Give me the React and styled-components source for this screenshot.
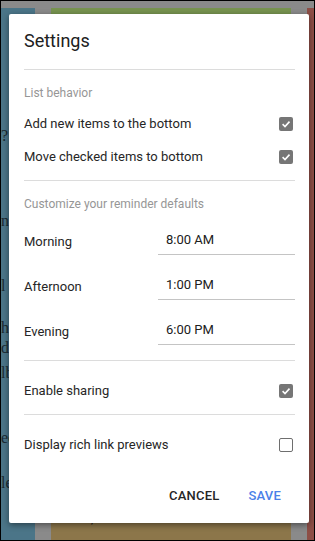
import styled, { createGlobalStyle } from "styled-components";

const GlobalStyle = createGlobalStyle`
  html, body {
    margin: 0;
    padding: 0;
    background: #ffffff;
  }
  * {
    box-sizing: border-box;
  }
`;

const Frame = styled.div`
  position: relative;
  width: 315px;
  height: 541px;
  border: 1px solid #000000;
  background: #8a8a8a;
  overflow: hidden;
  font-family: Roboto, "Liberation Sans", sans-serif;
`;

const Board = styled.div`
  display: flex;
  gap: 16px;
  height: 100%;
  padding-top: 7px;
`;

const Column = styled.div`
  display: flex;
  flex-direction: column;
  gap: 16px;
  width: ${(p) => p.width};
  flex: ${(p) => (p.width ? "none" : "1")};
`;

const Note = styled.div`
  background: ${(p) => p.color};
  height: ${(p) => p.height || "auto"};
  flex: ${(p) => (p.height ? "none" : "1")};
  display: flex;
  flex-direction: column;
`;

const Fragment = styled.span`
  display: block;
  margin-top: ${(p) => p.top}px;
  font-family: "Liberation Serif", serif;
  font-size: 16px;
  line-height: 16px;
  color: #1c2a31;
`;

const NoteTitle = styled.div`
  font-family: "Liberation Sans", sans-serif;
  font-weight: 700;
  font-size: 15px;
  line-height: 14px;
  color: #2a2416;
  padding-left: 14px;
  margin-top: -5px;
`;

const Dialog = styled.div`
  position: absolute;
  left: 8px;
  top: 13px;
  width: 300px;
  height: 509px;
  background: #ffffff;
  border-radius: 2px;
  box-shadow: 0 2px 6px rgba(0, 0, 0, 0.45);
  padding: 0 14px 0 15px;
  display: flex;
  flex-direction: column;
  color: #212121;
`;

const Title = styled.h2`
  margin: 0;
  padding: 17px 0 18px;
  font-size: 18px;
  line-height: 20px;
  font-weight: 400;
  color: #202020;
`;

const Divider = styled.div`
  height: 1px;
  background: #dcdcdc;
  flex: none;
`;

const Section = styled.div`
  display: flex;
  flex-direction: column;
  padding: ${(p) => p.pad};
`;

const SectionLabel = styled.div`
  font-size: 12px;
  line-height: 16px;
  color: #969696;
  margin-bottom: 6px;
`;

const Row = styled.label`
  display: flex;
  align-items: center;
  justify-content: space-between;
  height: 33px;
  font-size: 13px;
  color: #262626;
`;

const Box = styled.span`
  width: 14px;
  height: 14px;
  border-radius: 2px;
  margin-right: 2px;
  display: flex;
  align-items: center;
  justify-content: center;
  background: ${(p) => (p.checked ? "#767676" : "#ffffff")};
  border: ${(p) => (p.checked ? "none" : "1.5px solid #6e6e6e")};
`;

const ReminderList = styled.div`
  display: flex;
  flex-direction: column;
  gap: 13px;
  margin-top: 5px;
`;

const ReminderRow = styled.div`
  display: grid;
  grid-template-columns: 134px 1fr;
  align-items: center;
  height: 32px;
  font-size: 13px;
  color: #262626;
`;

const TimeField = styled.div`
  height: 32px;
  display: flex;
  align-items: center;
  padding: 2px 0 0 8px;
  border-bottom: 1px solid #c4c4c4;
  color: #202020;
`;

const ReminderName = styled.span`
  padding-top: 4px;
`;

const Actions = styled.div`
  margin-top: auto;
  display: flex;
  justify-content: flex-end;
  gap: 5px;
  padding: 0 2px 10px 0;
`;

const Button = styled.button`
  height: 36px;
  padding: 0 12px;
  border: none;
  background: none;
  font-family: Roboto, "Liberation Sans", sans-serif;
  font-size: 13px;
  font-weight: 500;
  letter-spacing: 0.2px;
  color: ${(p) => (p.primary ? "#4a80e8" : "#262626")};
`;

function Check({ checked }) {
  return (
    <Box checked={checked}>
      {checked && (
        <svg width="10" height="10" viewBox="0 0 10 10">
          <path
            d="M1.6 5.2 L4 7.5 L8.5 2.6"
            fill="none"
            stroke="#ffffff"
            strokeWidth="1.6"
          />
        </svg>
      )}
    </Box>
  );
}

const fragments = [
  { t: "?", top: 120 },
  { t: "n", top: 69 },
  { t: "l", top: 49 },
  { t: "h", top: 26 },
  { t: "d", top: 4 },
  { t: "lb", top: 9 },
  { t: "ec", top: 49 },
  { t: "le", top: 29 },
];

const reminders = [
  ["Morning", "8:00 AM"],
  ["Afternoon", "1:00 PM"],
  ["Evening", "6:00 PM"],
];

export default function App() {
  return (
    <>
      <GlobalStyle />
      <Frame>
        <Board>
          <Column width="34px">
            <Note color="#4b7588">
              {fragments.map((f, i) => (
                <Fragment key={i} top={f.top}>
                  {f.t}
                </Fragment>
              ))}
            </Note>
          </Column>
          <Column width="240px">
            <Note color="#77934f" height="491px" />
            <Note color="#8c764a">
              <NoteTitle>Tea, Oil and Air Filters</NoteTitle>
            </Note>
          </Column>
          <Column>
            <Note color="#8d4e46" />
          </Column>
        </Board>

        <Dialog>
          <Title>Settings</Title>
          <Divider />
          <Section pad="15px 0 7px">
            <SectionLabel>List behavior</SectionLabel>
            <Row>
              Add new items to the bottom
              <Check checked />
            </Row>
            <Row>
              Move checked items to bottom
              <Check checked />
            </Row>
          </Section>
          <Divider />
          <Section pad="15px 0 15px">
            <SectionLabel>Customize your reminder defaults</SectionLabel>
            <ReminderList>
              {reminders.map(([name, time]) => (
                <ReminderRow key={name}>
                  <ReminderName>{name}</ReminderName>
                  <TimeField>{time}</TimeField>
                </ReminderRow>
              ))}
            </ReminderList>
          </Section>
          <Divider />
          <Section pad="13px 0 7px">
            <Row>
              Enable sharing
              <Check checked />
            </Row>
          </Section>
          <Divider />
          <Section pad="13px 0 0">
            <Row>
              Display rich link previews
              <Check />
            </Row>
          </Section>
          <Actions>
            <Button>CANCEL</Button>
            <Button primary>SAVE</Button>
          </Actions>
        </Dialog>
      </Frame>
    </>
  );
}
